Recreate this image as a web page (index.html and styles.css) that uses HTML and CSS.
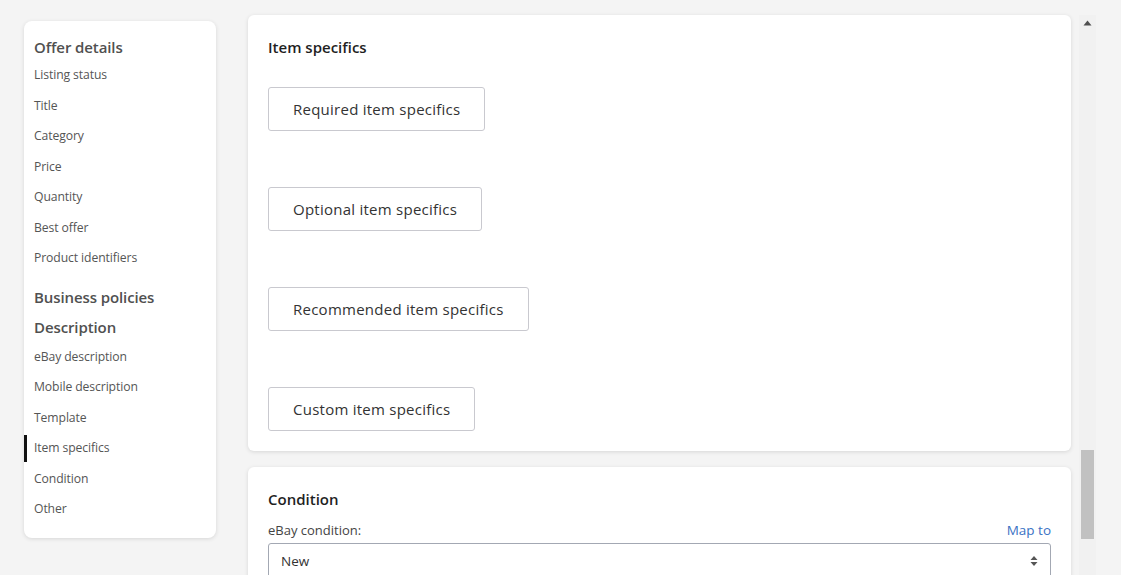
FILE: index.html
```html
<!DOCTYPE html>
<html lang="en">
<head>
<meta charset="utf-8">
<title>Offer details</title>
<link rel="stylesheet" href="styles.css">
</head>
<body>
<div class="page">
  <nav class="sidebar">
    <div class="nav-heading first">Offer details</div>
    <a class="nav-item">Listing status</a>
    <a class="nav-item">Title</a>
    <a class="nav-item">Category</a>
    <a class="nav-item">Price</a>
    <a class="nav-item">Quantity</a>
    <a class="nav-item">Best offer</a>
    <a class="nav-item">Product identifiers</a>
    <div class="nav-heading bp">Business policies</div>
    <div class="nav-heading desc">Description</div>
    <a class="nav-item">eBay description</a>
    <a class="nav-item">Mobile description</a>
    <a class="nav-item">Template</a>
    <a class="nav-item active">Item specifics</a>
    <a class="nav-item">Condition</a>
    <a class="nav-item">Other</a>
  </nav>

  <div class="scroller">
    <main class="content">
      <section class="card specifics">
        <h2 class="card-title">Item specifics</h2>
        <div class="btn-list">
          <button class="btn">Required item specifics</button>
          <button class="btn">Optional item specifics</button>
          <button class="btn">Recommended item specifics</button>
          <button class="btn">Custom item specifics</button>
        </div>
      </section>
      <section class="card condition">
        <h2 class="card-title">Condition</h2>
        <div class="field-row">
          <span class="field-label">eBay condition:</span>
          <a class="map-link">Map to</a>
        </div>
        <div class="select">
          <span>New</span>
          <svg class="select-arrow" width="8" height="12" viewBox="0 0 8 12"><path d="M4 1 L7.5 5 H0.5 Z" fill="#555"/><path d="M4 11 L7.5 7 H0.5 Z" fill="#555"/></svg>
        </div>
      </section>
    </main>
    <div class="scrollbar">
      <svg class="scroll-up" width="9" height="6" viewBox="0 0 9 6"><path d="M4.5 0.5 L8.5 5.5 H0.5 Z" fill="#505050"/></svg>
      <div class="scroll-thumb"></div>
    </div>
  </div>
</div>
</body>
</html>
```

FILE: styles.css
```css
* { box-sizing: border-box; }

html, body {
  margin: 0;
  height: 100%;
  overflow: hidden;
  background: #f4f4f4;
  font-family: "Open Sans", "Noto Sans", Arial, sans-serif;
}

.page {
  display: flex;
  align-items: flex-start;
  padding-left: 24px;
  height: 575px;
}

/* Sidebar */
.sidebar {
  width: 192px;
  margin-top: 21px;
  padding: 0 10px 13px 10px;
  background: #fff;
  border-radius: 8px;
  box-shadow: 0 1px 4px rgba(0, 0, 0, 0.12);
  display: flex;
  flex-direction: column;
}

.nav-heading {
  font-size: 15px;
  font-weight: 600;
  color: #505050;
  letter-spacing: -0.1px;
}
.nav-heading.first { padding-top: 13px; line-height: 26px; }
.nav-heading.bp { margin-top: 8px; line-height: 31px; }
.nav-heading.desc { line-height: 29px; }

.nav-item {
  position: relative;
  display: block;
  font-size: 12.2px;
  line-height: 30.5px;
  height: 30.5px;
  color: #555;
  letter-spacing: -0.1px;
}
.nav-item.active::before {
  content: "";
  position: absolute;
  left: -10px;
  top: 2px;
  bottom: 2px;
  width: 3px;
  background: #111;
}

/* Main scroll area */
.scroller {
  display: flex;
  margin-left: 32px;
  margin-top: 15px;
  height: 560px;
  gap: 8px;
}

.content {
  width: 823px;
  display: flex;
  flex-direction: column;
  gap: 16px;
}

.card {
  background: #fff;
  border-radius: 6px;
  box-shadow: 0 1px 4px rgba(0, 0, 0, 0.12);
  padding: 22px 20px 20px 20px;
}

.card-title {
  margin: 0;
  font-size: 15px;
  line-height: 21px;
  font-weight: 600;
  color: #1f1f1f;
}

.btn-list {
  margin-top: 29px;
  display: flex;
  flex-direction: column;
  align-items: flex-start;
  gap: 56px;
}

.btn {
  height: 44px;
  padding: 0 24px;
  background: #fff;
  border: 1px solid #c9c9cf;
  border-radius: 3px;
  font-family: inherit;
  font-size: 15px;
  font-weight: 500;
  color: #333;
  letter-spacing: 0.25px;
}

.condition {
  flex: 1;
}

.field-row {
  display: flex;
  justify-content: space-between;
  align-items: baseline;
  margin-top: 10px;
  line-height: 20px;
}

.field-label {
  font-size: 13px;
  color: #444;
}

.map-link {
  font-size: 13.5px;
  color: #3a72c4;
}

.select {
  margin-top: 3px;
  height: 36px;
  border: 1px solid #a3a8b3;
  border-radius: 3px;
  padding: 0 12px;
  display: flex;
  align-items: center;
  justify-content: space-between;
  font-size: 13.5px;
  color: #333;
}

/* Fake scrollbar */
.scrollbar {
  position: relative;
  width: 17px;
  height: 560px;
  background: #f1f1f1;
}
.scroll-up {
  position: absolute;
  left: 4px;
  top: 5px;
}
.scroll-thumb {
  position: absolute;
  left: 2px;
  top: 435px;
  width: 13px;
  height: 89px;
  background: #c1c1c1;
}
```
